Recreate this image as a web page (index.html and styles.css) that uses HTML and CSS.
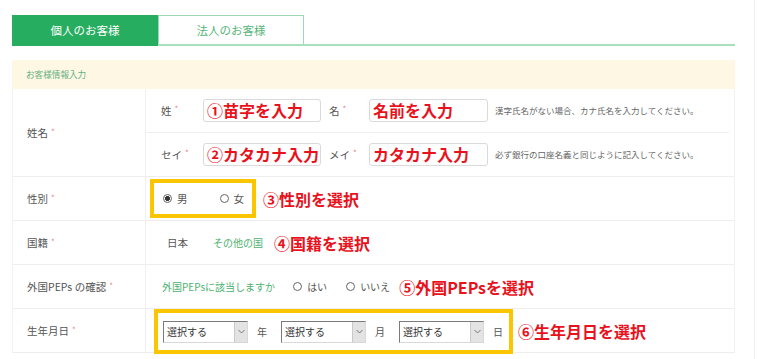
FILE: index.html
```html
<!DOCTYPE html>
<html lang="ja">
<head>
<meta charset="utf-8">
<link rel="stylesheet" href="styles.css">
</head>
<body>
<div class="page">
  <div class="tabs">
    <div class="tab tab-active">個人のお客様</div>
    <div class="tab tab-idle">法人のお客様</div>
  </div>
  <div class="section-head">お客様情報入力</div>
  <div class="form">
    <div class="row row-name">
      <div class="label">姓名<span class="req">*</span></div>
      <div class="cell cell-name">
        <div class="sub sub-first">
          <span class="sublabel">姓<span class="req">*</span></span>
          <div class="input"><span class="note">①苗字を入力</span></div>
          <span class="sublabel sublabel-2">名<span class="req">*</span></span>
          <div class="input input-2"><span class="note">名前を入力</span></div>
          <span class="help">漢字氏名がない場合、カナ氏名を入力してください。</span>
        </div>
        <div class="sub">
          <span class="sublabel">セイ<span class="req">*</span></span>
          <div class="input"><span class="note">②カタカナ入力</span></div>
          <span class="sublabel sublabel-2">メイ<span class="req">*</span></span>
          <div class="input input-2"><span class="note">カタカナ入力</span></div>
          <span class="help">必ず銀行の口座名義と同じように記入してください。</span>
        </div>
      </div>
    </div>
    <div class="row row-std">
      <div class="label">性別<span class="req">*</span></div>
      <div class="cell cell-gender">
        <div class="mark-box mark-gender">
          <span class="radio radio-on"></span><span class="opt">男</span>
          <span class="radio radio-gap"></span><span class="opt">女</span>
        </div>
        <span class="note note-gender">③性別を選択</span>
      </div>
    </div>
    <div class="row row-std">
      <div class="label">国籍<span class="req">*</span></div>
      <div class="cell cell-nation">
        <span class="opt">日本</span>
        <span class="green green-other">その他の国</span>
        <span class="note note-nation">④国籍を選択</span>
      </div>
    </div>
    <div class="row row-std">
      <div class="label">外国PEPs の確認<span class="req">*</span></div>
      <div class="cell cell-peps">
        <span class="green">外国PEPsに該当しますか</span>
        <span class="radio radio-yes"></span><span class="opt opt-peps">はい</span>
        <span class="radio radio-no"></span><span class="opt opt-peps">いいえ</span>
        <span class="note note-peps">⑤外国PEPsを選択</span>
      </div>
    </div>
    <div class="row row-std">
      <div class="label">生年月日<span class="req">*</span></div>
      <div class="cell cell-birth">
        <div class="mark-box mark-birth">
          <div class="select"><span class="select-text">選択する</span><span class="select-btn"><svg width="7" height="5" viewBox="0 0 7 5"><path d="M0.5 1 L3.5 4 L6.5 1" fill="none" stroke="#777" stroke-width="1"/></svg></span></div>
          <span class="unit">年</span>
          <div class="select select-next"><span class="select-text">選択する</span><span class="select-btn"><svg width="7" height="5" viewBox="0 0 7 5"><path d="M0.5 1 L3.5 4 L6.5 1" fill="none" stroke="#777" stroke-width="1"/></svg></span></div>
          <span class="unit">月</span>
          <div class="select select-next"><span class="select-text">選択する</span><span class="select-btn"><svg width="7" height="5" viewBox="0 0 7 5"><path d="M0.5 1 L3.5 4 L6.5 1" fill="none" stroke="#777" stroke-width="1"/></svg></span></div>
          <span class="unit">日</span>
        </div>
        <span class="note note-birth">⑥生年月日を選択</span>
      </div>
    </div>
  </div>
</div>
</body>
</html>
```
FILE: styles.css
```css
html, body {
  margin: 0;
  padding: 0;
  background: #fff;
}
body {
  font-family: "Noto Sans CJK JP", "Noto Sans", sans-serif;
  color: #555;
}
.page {
  width: 755px;
  height: 359px;
  box-sizing: border-box;
  border-right: 1px solid #efefef;
  padding: 15px 0 0 12px;
  overflow: hidden;
}
.tabs {
  display: flex;
  width: 723px;
  height: 29px;
  border-bottom: 2px solid #a9dfbd;
}
.tab {
  width: 146px;
  height: 31px;
  box-sizing: border-box;
  display: flex;
  align-items: center;
  justify-content: center;
  font-size: 11.5px;
  padding-bottom: 1px;
}
.tab-active {
  background: #27ad5f;
  color: #fff;
}
.tab-idle {
  background: #fff;
  color: #55b579;
  border: 1px solid #9fd9b4;
  border-bottom: none;
  height: 29px;
}
.section-head {
  width: 723px;
  height: 29px;
  margin-top: 14px;
  background: #fdf7e4;
  box-sizing: border-box;
  padding-left: 14px;
  font-size: 8.6px;
  line-height: 29px;
  color: #66b07f;
}
.form {
  width: 723px;
  box-sizing: border-box;
  border-left: 1px solid #f1f1f1;
  border-right: 1px solid #f1f1f1;
}
.row {
  display: flex;
  border-bottom: 1px solid #eeeeee;
  box-sizing: border-box;
}
.row-name {
  height: 88px;
}
.row-std {
  height: 44px;
}
.label {
  width: 133px;
  box-sizing: border-box;
  border-right: 1px solid #f0f0f0;
  padding-left: 14px;
  display: flex;
  align-items: center;
  font-size: 10.5px;
  color: #555;
}
.req {
  color: #e98585;
  font-size: 8px;
  margin-left: 3px;
  align-self: center;
  margin-bottom: 3px;
}
.cell {
  flex: 1;
  display: flex;
  align-items: center;
}
.cell-name {
  flex-direction: column;
  align-items: stretch;
}
.sub {
  height: 44px;
  box-sizing: border-box;
  display: flex;
  align-items: center;
  padding-left: 15px;
}
.sub-first {
  border-bottom: 1px solid #f0f0f0;
  margin-right: 5px;
}
.sublabel {
  width: 42px;
  display: flex;
  align-items: center;
  font-size: 10.5px;
  color: #555;
}
.sublabel-2 {
  width: 40px;
  margin-left: 8px;
}
.input {
  width: 118px;
  height: 23px;
  box-sizing: border-box;
  border: 1px solid #dadada;
  border-radius: 3px;
  display: flex;
  align-items: center;
  padding-left: 3px;
  overflow: hidden;
  white-space: nowrap;
}
.input-2 {
  width: 119px;
}
.note {
  font-size: 16px;
  font-weight: 700;
  color: #e8121d;
  line-height: 1;
  white-space: nowrap;
}
.help {
  margin-left: 7px;
  font-size: 8.5px;
  color: #666;
  white-space: nowrap;
}
.cell-gender {
  padding-left: 4px;
}
.mark-box {
  border: 4px solid #fbc600;
  box-sizing: border-box;
  display: flex;
  align-items: center;
}
.mark-gender {
  width: 106px;
  height: 39px;
  padding-left: 9px;
}
.radio {
  width: 9px;
  height: 9px;
  box-sizing: border-box;
  border: 1px solid #666;
  border-radius: 50%;
  background: #fff;
  margin-right: 5px;
  flex: none;
}
.radio-on {
  background: radial-gradient(circle, #333 0 2.2px, #fff 2.7px);
}
.radio-gap {
  margin-left: 32px;
}
.opt {
  font-size: 10.5px;
  color: #555;
  white-space: nowrap;
}
.note-gender {
  margin-left: 7px;
}
.cell-nation {
  padding-left: 21px;
}
.green {
  font-size: 10px;
  color: #4db270;
  white-space: nowrap;
}
.green-other {
  margin-left: 25px;
}
.note-nation {
  margin-left: 11px;
}
.cell-peps {
  padding-left: 16px;
}
.radio-yes {
  margin-left: 18px;
}
.radio-no {
  margin-left: 19px;
}
.opt-peps {
  font-size: 10px;
}
.note-peps {
  margin-left: 9px;
}
.cell-birth {
  padding-left: 8px;
  align-items: flex-start;
}
.mark-birth {
  height: 45px;
  padding-left: 5px;
  padding-right: 6px;
}
.select {
  width: 85px;
  height: 22px;
  box-sizing: border-box;
  border: 1px solid;
  border-color: #7b7b7b #d8d8d8 #d8d8d8 #7b7b7b;
  background: #fff;
  display: flex;
}
.select-next {
  margin-left: 14px;
}
.select-text {
  flex: 1;
  font-size: 10px;
  line-height: 20px;
  padding-left: 3px;
  color: #333;
  white-space: nowrap;
}
.select-btn {
  width: 12px;
  background: #e3e3e3;
  border-left: 1px solid #c9c9c9;
  display: flex;
  align-items: center;
  justify-content: center;
}
.unit {
  margin-left: 9px;
  font-size: 10px;
  color: #555;
}
.note-birth {
  margin-left: 5px;
  align-self: center;
}
```
